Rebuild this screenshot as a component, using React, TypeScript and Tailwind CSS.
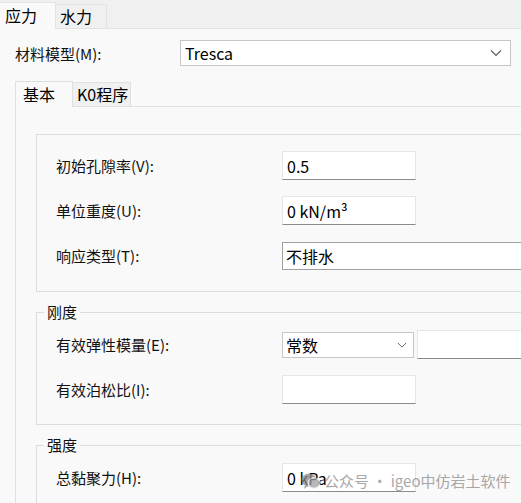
import React from 'react';

const font = { fontFamily: '"Noto Sans CJK SC", "Noto Sans", sans-serif' };

const Chevron: React.FC<{ className?: string }> = ({ className }) => (
  <svg width="12" height="8" viewBox="0 0 12 8" className={className}>
    <path d="M1 1.5 L6 6.5 L11 1.5" fill="none" stroke="#5a5a5a" strokeWidth="1.1" />
  </svg>
);

const TextBox: React.FC<{ value?: string; className?: string }> = ({ value = '', className = '' }) => (
  <div
    className={`h-[29px] bg-white border border-[#e6e6e6] border-b-[#8a8a8a] flex items-center pl-[4px] text-[16px] text-black ${className}`}
  >
    {value}
  </div>
);

const Row: React.FC<{ label: string; children: React.ReactNode }> = ({ label, children }) => (
  <div className="flex items-center h-[29px]">
    <div className="w-[245px] text-[15px] text-[#111] pl-[19px] leading-none">{label}</div>
    {children}
  </div>
);

const Group: React.FC<{ title?: string; className?: string; children: React.ReactNode }> = ({ title, className = '', children }) => (
  <div className={`relative w-[600px] border border-[#dcdcdc] ${className}`}>
    {title && (
      <div className="absolute -top-[11px] left-[7px] px-[3px] bg-[#f9f9f9] text-[15px] leading-[20px] text-[#111]">
        {title}
      </div>
    )}
    {children}
  </div>
);

export default function App() {
  return (
    <div className="relative w-[521px] h-[503px] overflow-hidden bg-[#f9f9f9]" style={font}>
      {/* outer tabs */}
      <div className="h-[29px] bg-[#f0f0f0] border-b border-[#e3e3e3] flex items-end">
        <div className="h-[27px] w-[56px] -mb-px bg-[#f9f9f9] border-r border-t border-[#e3e3e3] pl-[5px] text-[16px] leading-[24px] text-black">
          应力
        </div>
        <div className="h-[24px] w-[51px] border-t border-r border-[#e3e3e3] pl-[4px] text-[16px] leading-[22px] text-black">
          水力
        </div>
      </div>

      {/* material model */}
      <div className="flex items-center mt-[11px] h-[26px]">
        <div className="w-[180px] pl-[15px] text-[15px] text-[#111] leading-none">材料模型(M):</div>
        <div className="w-[331px] h-[26px] bg-white border border-[#c6c6c6] flex items-center justify-between pl-[4px] pr-[8px] text-[16px] text-black">
          <span>Tresca</span>
          <Chevron />
        </div>
      </div>

      {/* inner tabs */}
      <div className="mt-[15px] ml-[15px] flex items-end border-b border-[#e0e0e0] h-[26px]">
        <div className="h-[26px] w-[58px] -mb-px bg-[#f9f9f9] border-l border-t border-r border-[#e0e0e0] pl-[7px] text-[16px] leading-[24px] text-black">
          基本
        </div>
        <div className="h-[24px] w-[58px] bg-[#f0f0f0] border-t border-r border-[#e0e0e0] pl-[4px] text-[16px] leading-[22px] text-black">
          K0程序
        </div>
      </div>

      {/* inner pane */}
      <div className="ml-[15px] border-l border-[#e0e0e0] h-[400px] pt-[27px] pl-[20px]">
        <Group className="h-[158px] pt-[16px] flex flex-col gap-[16px]">
          <Row label="初始孔隙率(V):">
            <TextBox value="0.5" className="w-[134px]" />
          </Row>
          <Row label="单位重度(U):">
            <TextBox value="0 kN/m³" className="w-[134px]" />
          </Row>
          <Row label="响应类型(T):">
            <div className="h-[28px] w-[300px] bg-white border border-[#a0a0a0] flex items-center pl-[3px] text-[16px] text-black">
              不排水
            </div>
          </Row>
        </Group>

        <Group title="刚度" className="mt-[20px] h-[113px] pt-[17px] flex flex-col gap-[16px]">
          <Row label="有效弹性模量(E):">
            <div className="h-[26px] w-[132px] bg-white border border-[#c6c6c6] flex items-center justify-between pl-[3px] pr-[6px] text-[16px] text-black">
              <span>常数</span>
              <Chevron className="w-[10px]" />
            </div>
            <TextBox className="ml-[3px] w-[200px] h-[27px]" />
          </Row>
          <Row label="有效泊松比(I):">
            <TextBox className="w-[134px] h-[28px]" />
          </Row>
        </Group>

        <Group title="强度" className="mt-[20px] h-[100px] pt-[17px]">
          <Row label="总黏聚力(H):">
            <TextBox value="0 kPa" className="w-[134px]" />
          </Row>
        </Group>
      </div>

      {/* watermark */}
      <div className="absolute left-[301px] top-[470px] flex items-center gap-[3px] text-[15px] leading-[22px] text-[#8c8c8c] opacity-75 pointer-events-none">
        <svg width="20" height="18" viewBox="0 0 20 18">
          <ellipse cx="8" cy="8" rx="7.5" ry="6.5" fill="#888" />
          <ellipse cx="13" cy="11" rx="6" ry="5.2" fill="#a0a0a0" stroke="#f9f9f9" strokeWidth="1" />
          <path d="M4 13 L3 17 L7 14 Z" fill="#888" />
        </svg>
        <span>公众号 · igeo中仿岩土软件</span>
      </div>
    </div>
  );
}
